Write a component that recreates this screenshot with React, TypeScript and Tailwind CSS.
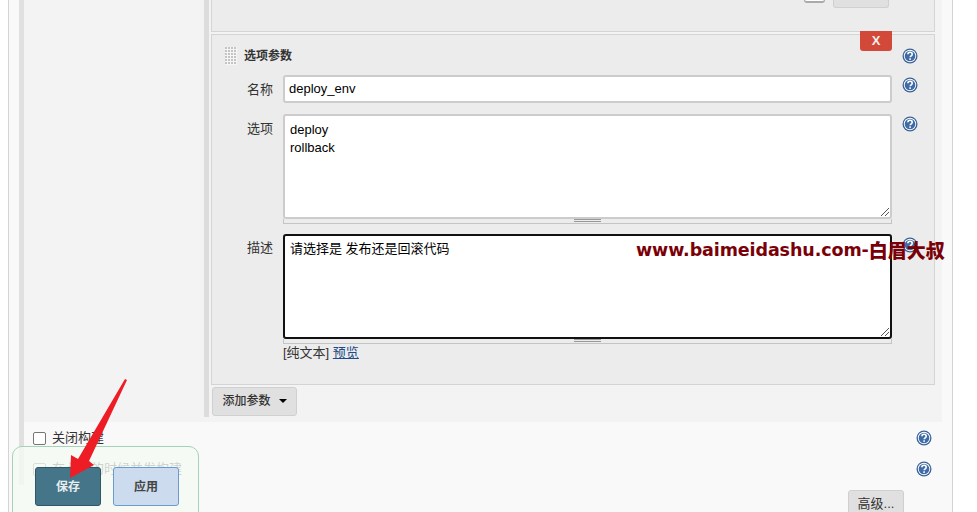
import React from 'react'

const HelpIcon = () => (
  <svg width="16" height="16" viewBox="0 0 16 16" className="shrink-0">
    <circle cx="8" cy="8" r="7.5" fill="#3a6298" />
    <circle cx="8" cy="8" r="6.2" fill="#ffffff" />
    <circle cx="8" cy="8" r="5.3" fill="#3f6ca6" />
    <path d="M5.9 6.3c0-1.3 1-2 2.2-2s2.1.8 2.1 1.9c0 1.6-2 1.6-2 3.1" fill="none" stroke="#ffffff" strokeWidth="1.6" />
    <rect x="7.3" y="10.3" width="1.6" height="1.6" fill="#ffffff" />
  </svg>
)

const ResizeGrip = () => (
  <svg width="8" height="8" viewBox="0 0 8 8" className="absolute right-[1px] bottom-[1px]">
    <path d="M0 8L8 0M4 8L8 4" stroke="#555" strokeWidth="1" />
  </svg>
)

const DragHandle = () => (
  <svg width="12" height="18" viewBox="0 0 12 18" className="shrink-0">
    <rect width="12" height="18" fill="#f6f6f6" />
    {[0, 1, 2, 3, 4, 5].map((row) =>
      [0, 1, 2, 3].map((col) => (
        <rect key={`${row}-${col}`} x={col * 3} y={row * 3} width="2" height="2" fill="#c4c4c4" />
      ))
    )}
  </svg>
)

const TextareaBox = ({ focused, children }: { focused?: boolean; children?: React.ReactNode }) => (
  <div>
    <div className={focused
      ? 'relative h-[105px] rounded-[3px] border-2 border-[#111] bg-white px-[5px] pb-[5px] pt-[4px] text-[13px] leading-[18px] text-black'
      : 'relative h-[105px] rounded-[3px] border-2 border-[#ccc] bg-white px-[5px] py-[5px] text-[13px] leading-[18px] text-black'}>
      {children}
      <ResizeGrip />
    </div>
    <div className="flex h-[5px] justify-center border-x border-b border-[#c4c4c4]">
      <div className="h-[3px] w-[27px] border-y border-[#999]" />
    </div>
  </div>
)

const App = () => {
  return (
    <div className="relative h-[512px] w-[977px] overflow-hidden bg-white font-['Liberation_Sans','Noto_Sans_CJK_SC',sans-serif] text-[13px] text-[#333]">
      <div className="ml-2 h-full w-[945px] border-x border-[#d4d4d4] bg-[#f9f9f9] pl-[10px] pr-[10px]">
        <div className="h-[485px] border-l-[5px] border-[#e0e0e0]">
          <div className="flex h-[422px] w-[918px] bg-[#f3f3f3]">
            <div className="w-[180px] shrink-0" />
            <div className="h-[417px] w-[738px] border-l-[5px] border-[#dcdcdc] pl-[2px]">
              <div className="flex h-[32px] w-[724px] justify-end gap-[8px] border-x border-b border-[#d4d4d4] bg-[#ececec] pr-[45px]">
                <div className="h-[3px] w-[21px] rounded-b-[6px] border-x border-b-2 border-[#aaa] bg-white" />
                <div className="h-[8px] w-[56px] rounded-b-[3px] border-x border-b border-[#d0d0d0] bg-[#e0e0e0]" />
              </div>
              <div className="relative mt-[2px] h-[351px] w-[724px] border border-[#d4d4d4] bg-[#ececec] pt-[12px]">
                <div className="absolute right-[42px] top-[-4px] flex h-[20px] w-[32px] items-center justify-center rounded-b-[3px] bg-[#d24939] text-[13px] font-bold text-[#f5ede8]">X</div>
                <div className="flex h-[18px] items-center pl-[13px] pr-[16px]">
                  <DragHandle />
                  <div className="ml-[7px] flex-1 text-[12px] font-bold">选项参数</div>
                  <HelpIcon />
                </div>
                <div className="mt-[10px] flex items-start pr-[16px]">
                  <div className="w-[61px] pt-[5px] text-right">名称</div>
                  <div className="ml-[10px] flex h-[28px] w-[609px] items-center rounded-[3px] border-2 border-[#ccc] bg-white px-[4px] text-black">deploy_env</div>
                  <div className="ml-[10px] pt-[2px]"><HelpIcon /></div>
                </div>
                <div className="mt-[11px] flex items-start pr-[16px]">
                  <div className="w-[61px] pt-[5px] text-right">选项</div>
                  <div className="ml-[10px] w-[609px]">
                    <TextareaBox>deploy<br />rollback</TextareaBox>
                  </div>
                  <div className="ml-[10px] pt-[2px]"><HelpIcon /></div>
                </div>
                <div className="mt-[10px] flex items-start pr-[16px]">
                  <div className="w-[61px] pt-[4px] text-right">描述</div>
                  <div className="ml-[10px] w-[609px]">
                    <TextareaBox focused>请选择是 发布还是回滚代码</TextareaBox>
                    <div className="mt-[1px] leading-[16px]">[纯文本] <span className="text-[#204a87] underline">预览</span></div>
                  </div>
                  <div className="ml-[10px] pt-[3px]"><HelpIcon /></div>
                </div>
              </div>
              <div className="ml-[1px] mt-[2px] flex h-[29px] w-[85px] items-center justify-center gap-[8px] rounded-[3px] border border-[#d0d0d0] bg-[#e0e0e0] pb-[1px] text-[12px] font-medium">
                添加参数
                <span className="h-0 w-0 border-x-[4px] border-t-[4px] border-x-transparent border-t-black" />
              </div>
            </div>
          </div>
          <div className="flex h-[31px] items-center pl-[9px] pr-[10px] pt-[1px]">
            <span className="h-[13px] w-[13px] rounded-[2px] border border-[#767676] bg-white" />
            <span className="ml-[6px] flex-1">关闭构建</span>
            <HelpIcon />
          </div>
          <div className="flex h-[31px] items-center pl-[9px] pr-[10px] pt-[1px]">
            <span className="h-[13px] w-[13px] rounded-[2px] border border-[#767676] bg-white" />
            <span className="ml-[6px] flex-1">在必要的时候并发构建</span>
            <HelpIcon />
          </div>
        </div>
      </div>
      <div className="absolute left-[848px] top-[490px] flex h-[30px] w-[56px] items-start justify-center rounded-[3px] border border-[#d0d0d0] bg-[#e0e0e0] pt-[3px]">高级...</div>
      <div className="absolute left-[12px] top-[446px] flex h-[70px] w-[187px] items-start gap-[12px] rounded-t-[10px] border border-[#a6d3b8] bg-[#f4faf2]/80 pl-[22px] pt-[20px]">
        <div className="flex h-[39px] w-[66px] items-center justify-center rounded-[3px] border border-[#2f5566] bg-[#457589] text-[12px] font-bold text-[#e8eef0]">保存</div>
        <div className="flex h-[39px] w-[66px] items-center justify-center rounded-[3px] border border-[#6a9bd0] bg-[#ccdcee] text-[12px] font-bold text-[#444]">应用</div>
      </div>
      <svg width="977" height="512" className="pointer-events-none absolute left-0 top-0">
        <polygon points="125,379 127,380 89,461 94,465 70,478 71,455 78,459" fill="#ee1c25" />
      </svg>
      <div className="absolute left-[636px] top-[240px] flex h-[20px] items-center whitespace-nowrap font-['DejaVu_Sans','Noto_Sans_CJK_SC',sans-serif] text-[17.5px] font-bold tracking-[-0.1px] text-[#7a0008]">
        www.baimeidashu.com-
        <span className="font-['Noto_Sans_CJK_SC',sans-serif] text-[19px] font-black tracking-normal">白眉大叔</span>
      </div>
    </div>
  )
}

export default App
